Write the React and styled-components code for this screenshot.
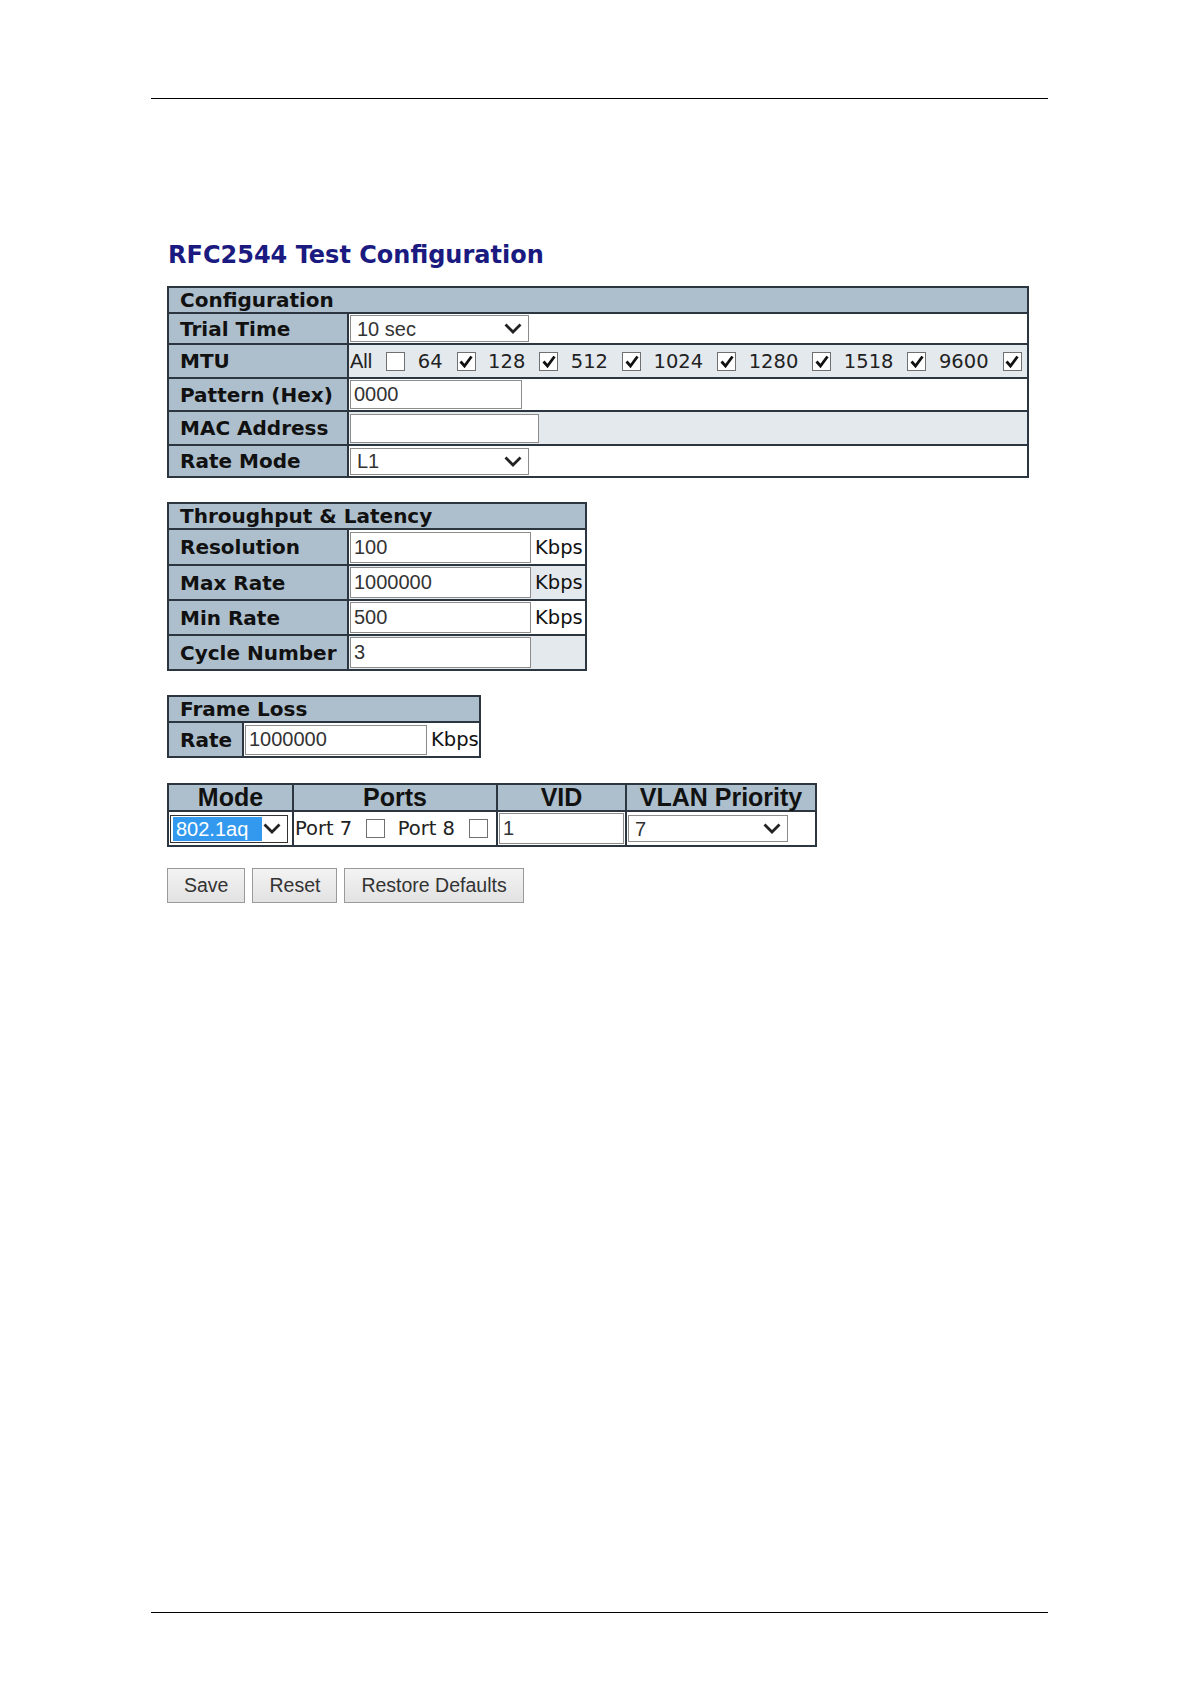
import React from "react";
import styled, { createGlobalStyle } from "styled-components";

const GlobalStyle = createGlobalStyle`
  html, body {
    margin: 0;
    padding: 0;
    background: #fff;
  }
  body {
    font-family: "DejaVu Sans", Verdana, sans-serif;
    color: #111;
  }
`;

const LINE = "#2b3640";
const LABEL_BG = "#adbfcc";
const ALT_BG = "#e4e9ee";
const VERDANA = `"DejaVu Sans", Verdana, sans-serif`;
const SEGOE = `"Liberation Sans", Arial, sans-serif`;

const Page = styled.div`
  width: 1191px;
  height: 1684px;
  box-sizing: border-box;
  padding-top: 98px;
  display: flex;
  flex-direction: column;
`;

const Rule = styled.div`
  margin-left: 151px;
  width: 897px;
  border-top: 1.5px solid #000;
`;

const FootRule = styled(Rule)`
  margin-top: auto;
  margin-bottom: 71px;
`;

const Content = styled.div`
  padding-left: 167px;
`;

const Title = styled.h1`
  margin: 142px 0 17px 1px;
  font: bold 24px/28px ${VERDANA};
  color: #1a1a80;
`;

const Grid = styled.table`
  border-collapse: collapse;
  table-layout: fixed;
  border: 2px solid ${LINE};
  width: ${(p) => p.$w}px;
  margin-bottom: ${(p) => p.$mb || 0}px;
`;

const Caption = styled.th`
  background: ${LABEL_BG};
  border: 2px solid ${LINE};
  height: ${(p) => p.$h}px;
  padding: 0 11px;
  text-align: left;
  font: bold 20px/22px ${VERDANA};
  color: #111;
  white-space: nowrap;
`;

const ColHead = styled.th`
  background: ${LABEL_BG};
  border: 2px solid ${LINE};
  height: 25px;
  padding: 0;
  text-align: center;
  font: bold 25px/25px ${SEGOE};
  color: #111;
  white-space: nowrap;
`;

const Label = styled.td`
  background: ${LABEL_BG};
  border: 2px solid ${LINE};
  height: ${(p) => p.$h}px;
  padding: 0 11px;
  font: bold 20px/22px ${VERDANA};
  color: #111;
  white-space: nowrap;
`;

const Value = styled.td`
  background: ${(p) => (p.$alt ? ALT_BG : "#fff")};
  border: 2px solid ${LINE};
  height: ${(p) => p.$h}px;
  padding: 0 1px;
  white-space: nowrap;
`;

const Line = styled.div`
  display: flex;
  align-items: center;
`;

const TextBox = styled.input`
  box-sizing: border-box;
  display: block;
  width: ${(p) => p.$w}px;
  height: ${(p) => p.$h || 30}px;
  margin: 0;
  padding: 0 3px;
  border: 1.5px solid #8c8c8c;
  background: #fff;
  font: 20px ${SEGOE};
  color: #333;
  outline: none;
`;

const SelectBox = styled.div`
  box-sizing: border-box;
  width: ${(p) => p.$w}px;
  height: ${(p) => p.$h || 27}px;
  display: flex;
  align-items: center;
  justify-content: space-between;
  padding: 0 6px 0 ${(p) => (p.$focus ? 2 : 3)}px;
  border: 1.5px solid ${(p) => (p.$focus ? "#333" : "#8c8c8c")};
  background: #fff;
  font: 20px ${SEGOE};
  color: #333;
`;

const Picked = styled.span`
  display: inline-block;
  padding: 0 14px 0 3px;
  line-height: 24px;
  background: ${(p) => (p.$on ? "#3399ee" : "transparent")};
  color: ${(p) => (p.$on ? "#fff" : "#333")};
`;

const Unit = styled.span`
  margin-left: 4px;
  font: 19.5px ${VERDANA};
  color: #111;
`;

const Word = styled.span`
  font: ${(p) => (p.$plain ? `20px ${SEGOE}` : `19.5px ${VERDANA}`)};
  color: #222;
  margin-right: 14px;
`;

const Box = styled.span`
  box-sizing: border-box;
  flex: none;
  width: 19px;
  height: 19px;
  margin-right: 12.5px;
  border: 1.5px solid #707070;
  background: #fff;
  display: inline-flex;
  align-items: center;
  justify-content: center;
`;

const Buttons = styled.div`
  display: flex;
  gap: 7px;
  margin-top: 21px;
`;

const Button = styled.button`
  box-sizing: border-box;
  height: 35px;
  padding: 0 16px;
  border: 1.5px solid #9a9a9a;
  border-radius: 0;
  background: linear-gradient(#f3f3f3, #e2e2e2);
  font: 19.5px ${SEGOE};
  color: #333;
`;

const Chevron = () => (
  <svg width="18" height="11" viewBox="0 0 18 11">
    <polyline points="1.5,1.5 9,9 16.5,1.5" fill="none" stroke="#222" strokeWidth="2.8" />
  </svg>
);

const Check = ({ on }) => (
  <Box>
    {on && (
      <svg width="14" height="13" viewBox="0 0 14 13">
        <polyline points="1.5,6.5 5.5,11 12.5,1.5" fill="none" stroke="#111" strokeWidth="2.8" />
      </svg>
    )}
  </Box>
);

const Select = ({ w, h, text, focus }) => (
  <SelectBox $w={w} $h={h} $focus={focus}>
    <Picked $on={focus}>{text}</Picked>
    <Chevron />
  </SelectBox>
);

const mtu = ["64", "128", "512", "1024", "1280", "1518", "9600"];

export default function App() {
  return (
    <>
      <GlobalStyle />
      <Page>
        <Rule />
        <Content>
          <Title>RFC2544 Test Configuration</Title>

          <Grid $w={862} $mb={24}>
            <colgroup>
              <col style={{ width: 180 }} />
              <col />
            </colgroup>
            <tbody>
              <tr>
                <Caption colSpan={2} $h={24}>Configuration</Caption>
              </tr>
              <tr>
                <Label $h={29}>Trial Time</Label>
                <Value $h={29}>
                  <Select w={179} text="10 sec" />
                </Value>
              </tr>
              <tr>
                <Label $h={32}>MTU</Label>
                <Value $h={32} $alt>
                  <Line>
                    <Word $plain>All</Word>
                    <Check />
                    {mtu.map((m) => (
                      <React.Fragment key={m}>
                        <Word>{m}</Word>
                        <Check on />
                      </React.Fragment>
                    ))}
                  </Line>
                </Value>
              </tr>
              <tr>
                <Label $h={31}>Pattern (Hex)</Label>
                <Value $h={31}>
                  <TextBox $w={172} $h={29} defaultValue="0000" readOnly />
                </Value>
              </tr>
              <tr>
                <Label $h={32}>MAC Address</Label>
                <Value $h={32} $alt>
                  <TextBox $w={189} $h={29} defaultValue="" readOnly />
                </Value>
              </tr>
              <tr>
                <Label $h={30}>Rate Mode</Label>
                <Value $h={30}>
                  <Select w={179} text="L1" />
                </Value>
              </tr>
            </tbody>
          </Grid>

          <Grid $w={420} $mb={24}>
            <colgroup>
              <col style={{ width: 180 }} />
              <col />
            </colgroup>
            <tbody>
              <tr>
                <Caption colSpan={2} $h={24}>Throughput &amp; Latency</Caption>
              </tr>
              <tr>
                <Label $h={34}>Resolution</Label>
                <Value $h={34}>
                  <Line>
                    <TextBox $w={181} $h={31} defaultValue="100" readOnly />
                    <Unit>Kbps</Unit>
                  </Line>
                </Value>
              </tr>
              <tr>
                <Label $h={33}>Max Rate</Label>
                <Value $h={33} $alt>
                  <Line>
                    <TextBox $w={181} $h={31} defaultValue="1000000" readOnly />
                    <Unit>Kbps</Unit>
                  </Line>
                </Value>
              </tr>
              <tr>
                <Label $h={33}>Min Rate</Label>
                <Value $h={33}>
                  <Line>
                    <TextBox $w={181} $h={31} defaultValue="500" readOnly />
                    <Unit>Kbps</Unit>
                  </Line>
                </Value>
              </tr>
              <tr>
                <Label $h={33}>Cycle Number</Label>
                <Value $h={33} $alt>
                  <TextBox $w={181} $h={31} defaultValue="3" readOnly />
                </Value>
              </tr>
            </tbody>
          </Grid>

          <Grid $w={314} $mb={25}>
            <colgroup>
              <col style={{ width: 75 }} />
              <col />
            </colgroup>
            <tbody>
              <tr>
                <Caption colSpan={2} $h={24}>Frame Loss</Caption>
              </tr>
              <tr>
                <Label $h={33}>Rate</Label>
                <Value $h={33}>
                  <Line>
                    <TextBox $w={182} defaultValue="1000000" readOnly />
                    <Unit>Kbps</Unit>
                  </Line>
                </Value>
              </tr>
            </tbody>
          </Grid>

          <Grid $w={650}>
            <colgroup>
              <col style={{ width: 125 }} />
              <col style={{ width: 204 }} />
              <col style={{ width: 129 }} />
              <col />
            </colgroup>
            <tbody>
              <tr>
                <ColHead>Mode</ColHead>
                <ColHead>Ports</ColHead>
                <ColHead>VID</ColHead>
                <ColHead>VLAN Priority</ColHead>
              </tr>
              <tr>
                <Value $h={33}>
                  <Select w={118} h={28} text="802.1aq" focus />
                </Value>
                <Value $h={33}>
                  <Line>
                    <Word>Port 7</Word>
                    <Check />
                    <Word>Port 8</Word>
                    <Check />
                  </Line>
                </Value>
                <Value $h={33}>
                  <TextBox $w={125} $h={31} defaultValue="1" readOnly />
                </Value>
                <Value $h={33}>
                  <Select w={160} text="7" />
                </Value>
              </tr>
            </tbody>
          </Grid>

          <Buttons>
            <Button>Save</Button>
            <Button>Reset</Button>
            <Button>Restore Defaults</Button>
          </Buttons>
        </Content>
        <FootRule />
      </Page>
    </>
  );
}
